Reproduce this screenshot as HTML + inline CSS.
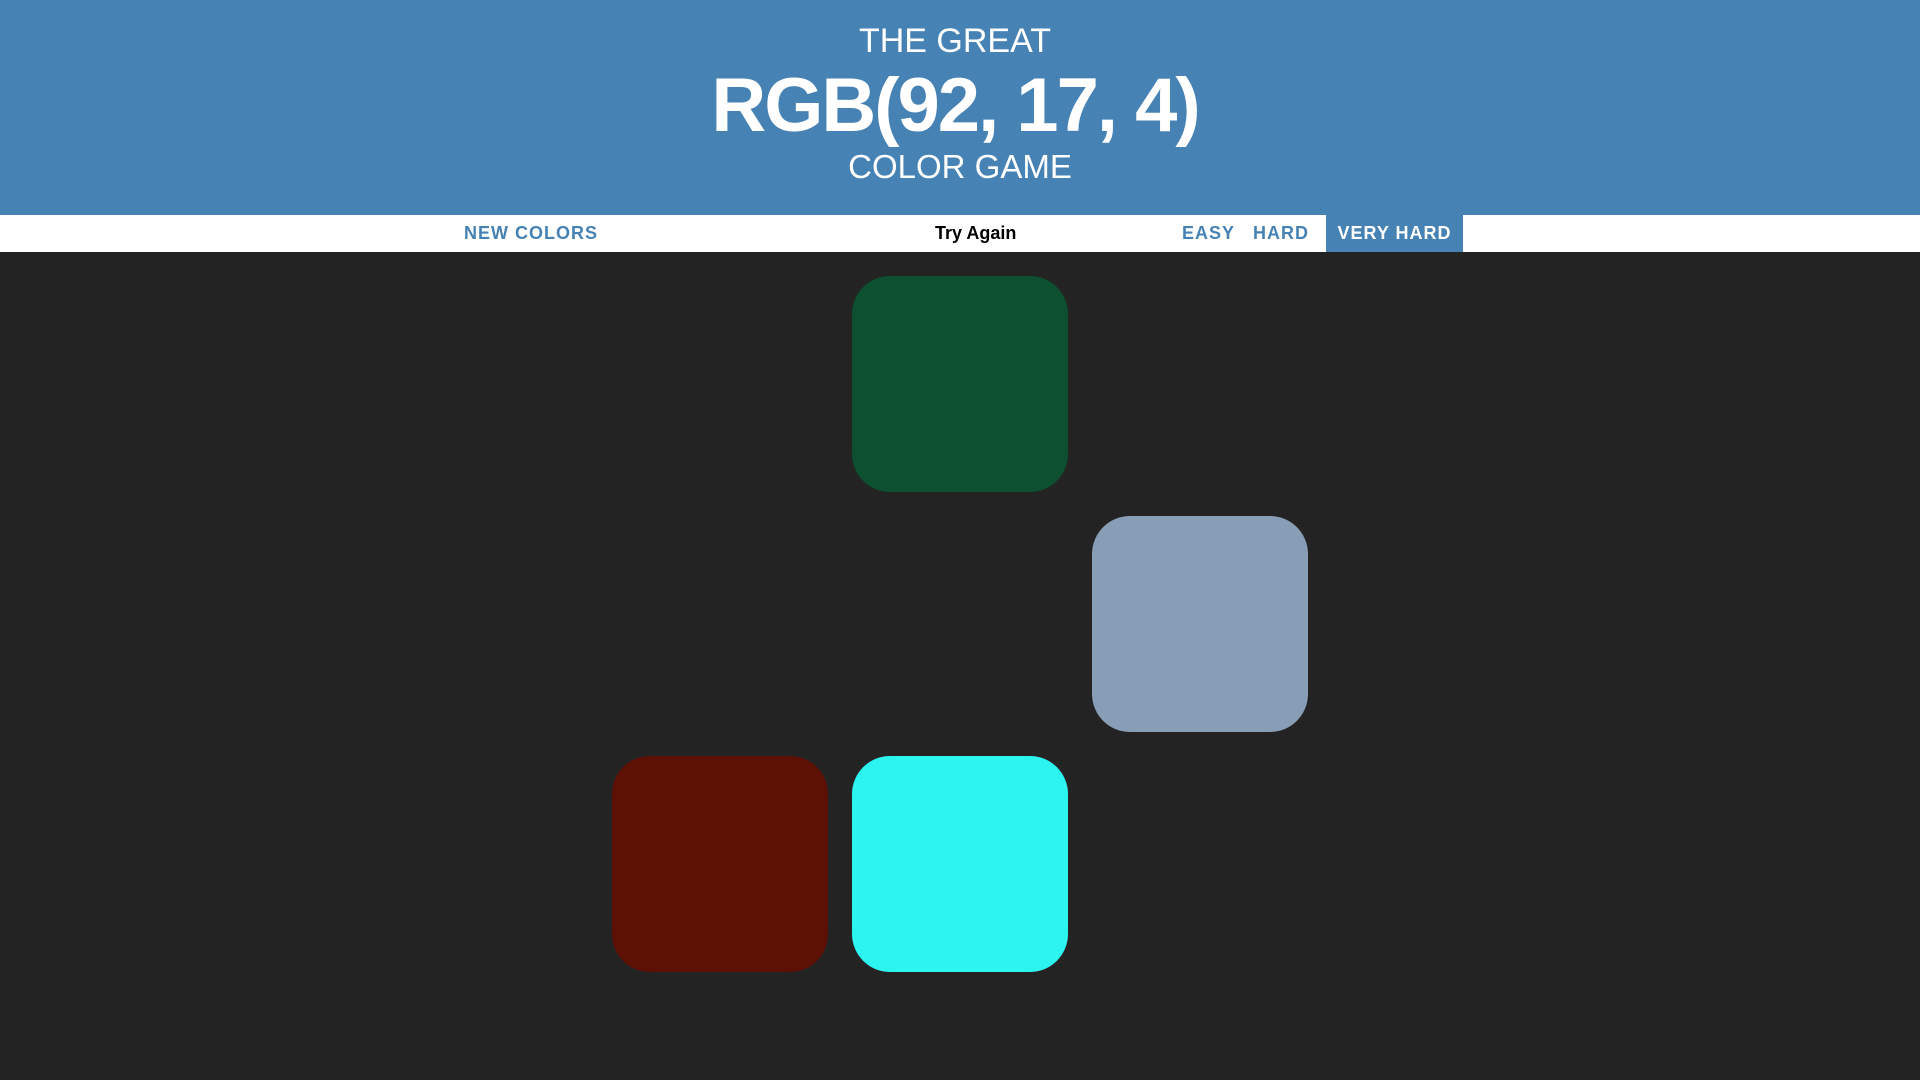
<!DOCTYPE html>
<html><head><meta charset="utf-8"><style>
body{margin:0;width:1920px;height:1080px;background:#232323;font-family:"Liberation Sans",sans-serif;overflow:hidden;position:relative}
h1{margin:0;position:absolute;top:0;left:0;width:1920px;height:215px;background:#4682b4;color:#fff;text-align:center;font-weight:normal}
.l1{position:absolute;top:22px;width:100%;font-size:34px;left:-5px}
.l2{position:absolute;top:62px;width:100%;font-size:76px;font-weight:bold;letter-spacing:-2px;left:-5px}
.l3{position:absolute;top:148px;width:100%;font-size:33px}
.bar{position:absolute;top:215px;left:0;width:1920px;height:37px;background:#fff}
.bar span{position:absolute;top:0;line-height:37px;font-size:18px;font-weight:bold;color:#4682b4;letter-spacing:1px}
.sq{position:absolute;width:216px;height:216px;border-radius:38px}
</style></head><body>
<h1><div class="l1">THE GREAT</div><div class="l2">RGB(92, 17, 4)</div><div class="l3">COLOR GAME</div></h1>
<div class="bar">
<span style="left:464px">NEW COLORS</span>
<span style="left:935px;color:#000;letter-spacing:0">Try Again</span>
<span style="left:1182px">EASY</span>
<span style="left:1253px">HARD</span>
<span style="left:1326px;width:137px;text-align:center;background:#4682b4;color:#fff">VERY HARD</span>
</div>
<div class="sq" style="left:852px;top:276px;background:#0c5030"></div>
<div class="sq" style="left:1092px;top:516px;background:#879eb6"></div>
<div class="sq" style="left:612px;top:756px;background:#5c1104"></div>
<div class="sq" style="left:852px;top:756px;background:#2ef4f0"></div>
</body></html>
